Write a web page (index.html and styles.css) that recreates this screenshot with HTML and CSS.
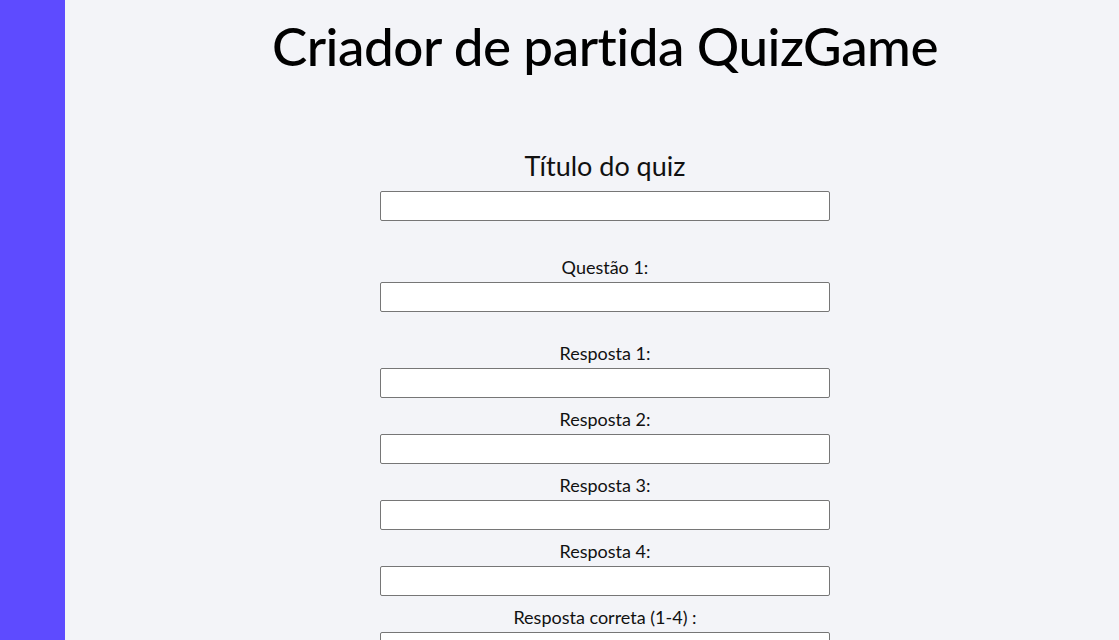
FILE: index.html
```html
<!DOCTYPE html>
<html lang="pt">
<head>
<meta charset="utf-8">
<title>Criador de partida QuizGame</title>
<link rel="stylesheet" href="styles.css">
</head>
<body>
<div class="layout">
  <aside class="sidebar"></aside>
  <main class="main">
    <h1 class="page-title">Criador de partida QuizGame</h1>
    <form class="quiz-form">
      <div class="field field-title">
        <label class="label-big" for="titulo">Título do quiz</label>
        <input class="text-input" id="titulo" type="text" autofocus>
      </div>
      <div class="field field-question">
        <label class="label" for="q1">Questão 1:</label>
        <input class="text-input" id="q1" type="text">
      </div>
      <div class="field field-first">
        <label class="label" for="r1">Resposta 1:</label>
        <input class="text-input" id="r1" type="text">
      </div>
      <div class="field">
        <label class="label" for="r2">Resposta 2:</label>
        <input class="text-input" id="r2" type="text">
      </div>
      <div class="field">
        <label class="label" for="r3">Resposta 3:</label>
        <input class="text-input" id="r3" type="text">
      </div>
      <div class="field">
        <label class="label" for="r4">Resposta 4:</label>
        <input class="text-input" id="r4" type="text">
      </div>
      <div class="field">
        <label class="label" for="rc">Resposta correta (1-4) :</label>
        <input class="text-input" id="rc" type="text">
      </div>
    </form>
  </main>
</div>
</body>
</html>
```

FILE: styles.css
```css
* { box-sizing: border-box; }
html, body {
  margin: 0;
  padding: 0;
  height: 100%;
  overflow: hidden;
}
body {
  font-family: Lato, "Open Sans", sans-serif;
  background: #f3f4f8;
  color: #000;
}
.layout {
  display: flex;
  min-height: 100vh;
}
.sidebar {
  width: 65px;
  flex: none;
  background: #5e4bff;
}
.main {
  flex: 1;
  padding-left: 26px;
  display: flex;
  flex-direction: column;
  align-items: center;
}
.page-title {
  margin: 14px 0 0;
  font-size: 53px;
  line-height: 64px;
  font-weight: 500;
  letter-spacing: -0.5px;
}
.quiz-form {
  display: flex;
  flex-direction: column;
  align-items: center;
  width: 450px;
  margin-top: 74px;
}
.field {
  display: flex;
  flex-direction: column;
  align-items: center;
  width: 100%;
  margin-top: 11px;
}
.field-title { margin-top: 0; }
.field-question { margin-top: 36px; }
.field-first { margin-top: 31px; }
.label-big {
  font-size: 27px;
  line-height: 28px;
  margin-bottom: 11px;
  color: #111;
}
.label {
  font-size: 18px;
  line-height: 20px;
  margin-bottom: 5px;
  color: #111;
}
.text-input {
  width: 450px;
  height: 30px;
  border: 1px solid #767676;
  border-radius: 2px;
  background: #fff;
  padding: 1px 2px;
  font-size: 14px;
}
.text-input:focus {
  outline: none;
  border-color: #767676;
}
```
